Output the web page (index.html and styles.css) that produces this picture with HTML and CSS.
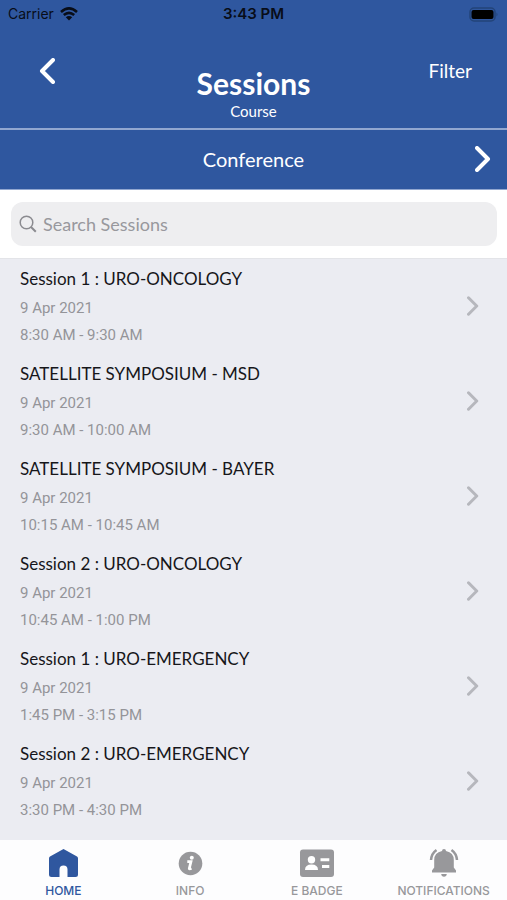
FILE: index.html
```html
<!DOCTYPE html>
<html lang="en">
<head>
<meta charset="utf-8">
<meta name="viewport" content="width=device-width, initial-scale=1">
<title>Sessions</title>
<link rel="stylesheet" href="styles.css">
</head>
<body>
<svg class="defs" aria-hidden="true">
  <symbol id="chevron" viewBox="0 0 16 26"><path d="M2 2l11 11L2 24" fill="none" stroke="currentColor" stroke-linecap="round" stroke-linejoin="round"/></symbol>
</svg>
<header class="top">
  <div class="status">
    <span class="carrier">Carrier
      <svg width="18" height="14" viewBox="0 0 18 14" fill="none" stroke="currentColor" stroke-width="2.6" aria-hidden="true"><path d="M1 4.900Q9-2 17 4.900M3.800 8Q9 3.600 14.200 8"/><path d="M9 13.500L5.800 10.300Q9 7.800 12.200 10.300Z" fill="currentColor" stroke="none"/></svg>
    </span>
    <span class="clock">3:43 PM</span>
    <svg class="battery" width="30" height="15" viewBox="0 0 30 15" aria-hidden="true"><rect x="1" y="1" width="25" height="13" rx="4" fill="none" stroke="#234479" stroke-width="1.500"/><rect x="2.500" y="3" width="22" height="9" rx="2" fill="#000"/><path d="M27.500 5.500q2 2 0 4z" fill="#234479"/></svg>
  </div>
  <div class="bar">
    <button class="back" type="button" aria-label="Back"><svg width="16" height="26" viewBox="0 0 16 26" aria-hidden="true"><path d="M14 2L3 13l11 11" fill="none" stroke="currentColor" stroke-width="4" stroke-linecap="round" stroke-linejoin="round"/></svg></button>
    <div class="heading"><h1>Sessions</h1><p>Course</p></div>
    <button class="filter" type="button">Filter</button>
  </div>
</header>
<div class="switcher">
  <span>Conference</span>
  <button class="next" type="button" aria-label="Next"><svg width="16" height="26" aria-hidden="true"><use href="#chevron"/></svg></button>
</div>
<form class="search">
  <label class="field">
    <svg width="18" height="18" viewBox="0 0 18 18" fill="none" stroke="currentColor" stroke-width="1.500" aria-hidden="true"><circle cx="7.500" cy="7.500" r="6.300"/><path d="M12 12l4.800 4.800" stroke-width="2"/></svg>
    <input type="search" placeholder="Search Sessions" aria-label="Search Sessions">
  </label>
</form>
<main>
  <ul class="list">
    <li><a class="row" href="#"><span><strong>Session 1 : URO-ONCOLOGY</strong><small>9 Apr 2021</small><small>8:30 AM - 9:30 AM</small></span><svg width="12" height="20" aria-hidden="true"><use href="#chevron"/></svg></a></li>
    <li><a class="row" href="#"><span><strong>SATELLITE SYMPOSIUM - MSD</strong><small>9 Apr 2021</small><small>9:30 AM - 10:00 AM</small></span><svg width="12" height="20" aria-hidden="true"><use href="#chevron"/></svg></a></li>
    <li><a class="row" href="#"><span><strong>SATELLITE SYMPOSIUM - BAYER</strong><small>9 Apr 2021</small><small>10:15 AM - 10:45 AM</small></span><svg width="12" height="20" aria-hidden="true"><use href="#chevron"/></svg></a></li>
    <li><a class="row" href="#"><span><strong>Session 2 : URO-ONCOLOGY</strong><small>9 Apr 2021</small><small>10:45 AM - 1:00 PM</small></span><svg width="12" height="20" aria-hidden="true"><use href="#chevron"/></svg></a></li>
    <li><a class="row" href="#"><span><strong>Session 1 : URO-EMERGENCY</strong><small>9 Apr 2021</small><small>1:45 PM - 3:15 PM</small></span><svg width="12" height="20" aria-hidden="true"><use href="#chevron"/></svg></a></li>
    <li><a class="row" href="#"><span><strong>Session 2 : URO-EMERGENCY</strong><small>9 Apr 2021</small><small>3:30 PM - 4:30 PM</small></span><svg width="12" height="20" aria-hidden="true"><use href="#chevron"/></svg></a></li>
  </ul>
</main>
<nav class="tabs">
  <a class="tab active" href="#"><svg width="36" height="30" viewBox="0 0 36 30" fill="currentColor" aria-hidden="true"><path d="M18.500 1L32 8.500Q33 9.200 33 10.500V26.500Q33 29 30.500 29H22.500V21.500Q22.500 17.500 18.500 17.500T14.500 21.500V29H6.500Q4 29 4 26.500V10.500Q4 9.200 5 8.500Z"/></svg>HOME</a>
  <a class="tab" href="#"><svg width="36" height="30" viewBox="0 0 36 30" fill="currentColor" aria-hidden="true"><circle cx="18.500" cy="15.500" r="11.800"/><circle cx="19.800" cy="9.800" r="2" fill="#fff"/><path d="M15.300 13.700h3.700l-1.700 6.600q-.3 1.300 2.200.1" fill="none" stroke="#fff" stroke-width="2.700"/></svg>INFO</a>
  <a class="tab" href="#"><svg width="36" height="30" viewBox="0 0 36 30" aria-hidden="true"><rect x="1" y="1.500" width="34" height="27.500" rx="3" fill="currentColor"/><g fill="#fff"><circle cx="12.500" cy="11.800" r="3.700"/><path d="M6 22q0-5.500 6.500-5.500T19 22z"/><path d="M21.500 10.300h8.800v3h-8.800zM23 17h7.300v3H23z"/></g></svg>E BADGE</a>
  <a class="tab" href="#"><svg width="36" height="30" viewBox="0 0 36 30" fill="currentColor" aria-hidden="true"><path d="M16 3q0-2 2-2t2 2q7.800 1.500 7.800 9v7.500l2.200 3v2H6v-2l2.200-3V12q0-7.500 7.800-9zM15.200 26h5.600q-.3 2.800-2.800 2.800T15.200 26z"/><path d="M10.500 2Q5.500 5.500 5 12M25.500 2Q30.500 5.500 31 12" fill="none" stroke="currentColor" stroke-width="2.500"/></svg>NOTIFICATIONS</a>
</nav>
</body>
</html>
```
FILE: styles.css
```css
* { box-sizing: border-box; }
body {
  margin: 0;
  min-height: 100vh;
  display: flex;
  flex-direction: column;
  background: #ebecf2;
  font-family: Lato, "Liberation Sans", sans-serif;
}
h1, p, ul { margin: 0; padding: 0; }
button { border: 0; padding: 0; background: none; color: inherit; font: inherit; }
a { color: inherit; text-decoration: none; }
svg { flex: none; }
.defs { position: absolute; width: 0; height: 0; }

.top { background: #2f579f; color: #fff; border-bottom: 2px solid #92a7d0; }
.status {
  display: grid;
  grid-template-columns: 1fr auto 1fr;
  align-items: center;
  height: 28px;
  padding: 0 8px;
  color: #080d18;
  font: 14px/20px Inter, sans-serif;
}
.carrier { display: flex; align-items: center; gap: 6px; }
.clock { font-size: 15px; font-weight: 600; }
.battery { justify-self: end; }
.bar {
  display: grid;
  grid-template-columns: 1fr auto 1fr;
  align-items: start;
  padding: 30px 35px 6px;
}
.back { justify-self: start; width: 24px; height: 26px; }
.back svg { display: block; margin: 0 auto; }
.heading { padding-top: 8px; text-align: center; }
h1 { font-size: 30px; line-height: 34px; font-weight: 700; }
.heading p { font-size: 15px; line-height: 22px; }
.filter { justify-self: end; font-size: 19px; line-height: 26px; }

.switcher {
  display: grid;
  grid-template-columns: 1fr auto 1fr;
  align-items: center;
  height: 60px;
  padding: 0 16px 2px;
  background: #2f579f;
  border-bottom: 1px solid #92a7d0;
  color: #fff;
  font-size: 20px;
  line-height: 28px;
}
.switcher span { grid-column: 2; }
.next { justify-self: end; stroke-width: 4px; }
.next svg { display: block; }

.search { padding: 12px 10px 12px 11px; background: #fff; border-bottom: 1px solid #e3e4e8; }
.field {
  display: flex;
  align-items: center;
  gap: 6px;
  height: 44px;
  padding: 0 8px;
  border-radius: 12px;
  background: #eeeef0;
  color: #8b8b90;
}
.field input {
  flex: 1;
  min-width: 0;
  border: 0;
  padding: 0;
  outline: 0;
  background: none;
  font: 18px/24px Lato, sans-serif;
  color: #222;
}
.field input::placeholder { color: #98989d; opacity: 1; }

main { flex: 1; }
.list { list-style: none; }
.row {
  display: flex;
  align-items: flex-start;
  justify-content: space-between;
  padding: 8px 28px 5px 20px;
  color: #b6b7bd;
  stroke-width: 4px;
}
.row svg { margin-top: 29px; }
.row span { display: flex; flex-direction: column; }
.row strong {
  margin-bottom: 4px;
  color: #16161a;
  font-size: 17px;
  line-height: 24px;
  font-weight: 400;
}
.row small { color: #949499; font: 15px/27px Roboto, sans-serif; }

.tabs {
  display: grid;
  grid-template-columns: repeat(4, 1fr);
  height: 60px;
  padding-top: 8px;
  background: #fdfdfe;
}
.tab {
  display: flex;
  flex-direction: column;
  align-items: center;
  gap: 4px;
  color: #98989b;
  font: 500 12px/18px Inter, sans-serif;
}
.tab.active { color: #2f579f; }
```
